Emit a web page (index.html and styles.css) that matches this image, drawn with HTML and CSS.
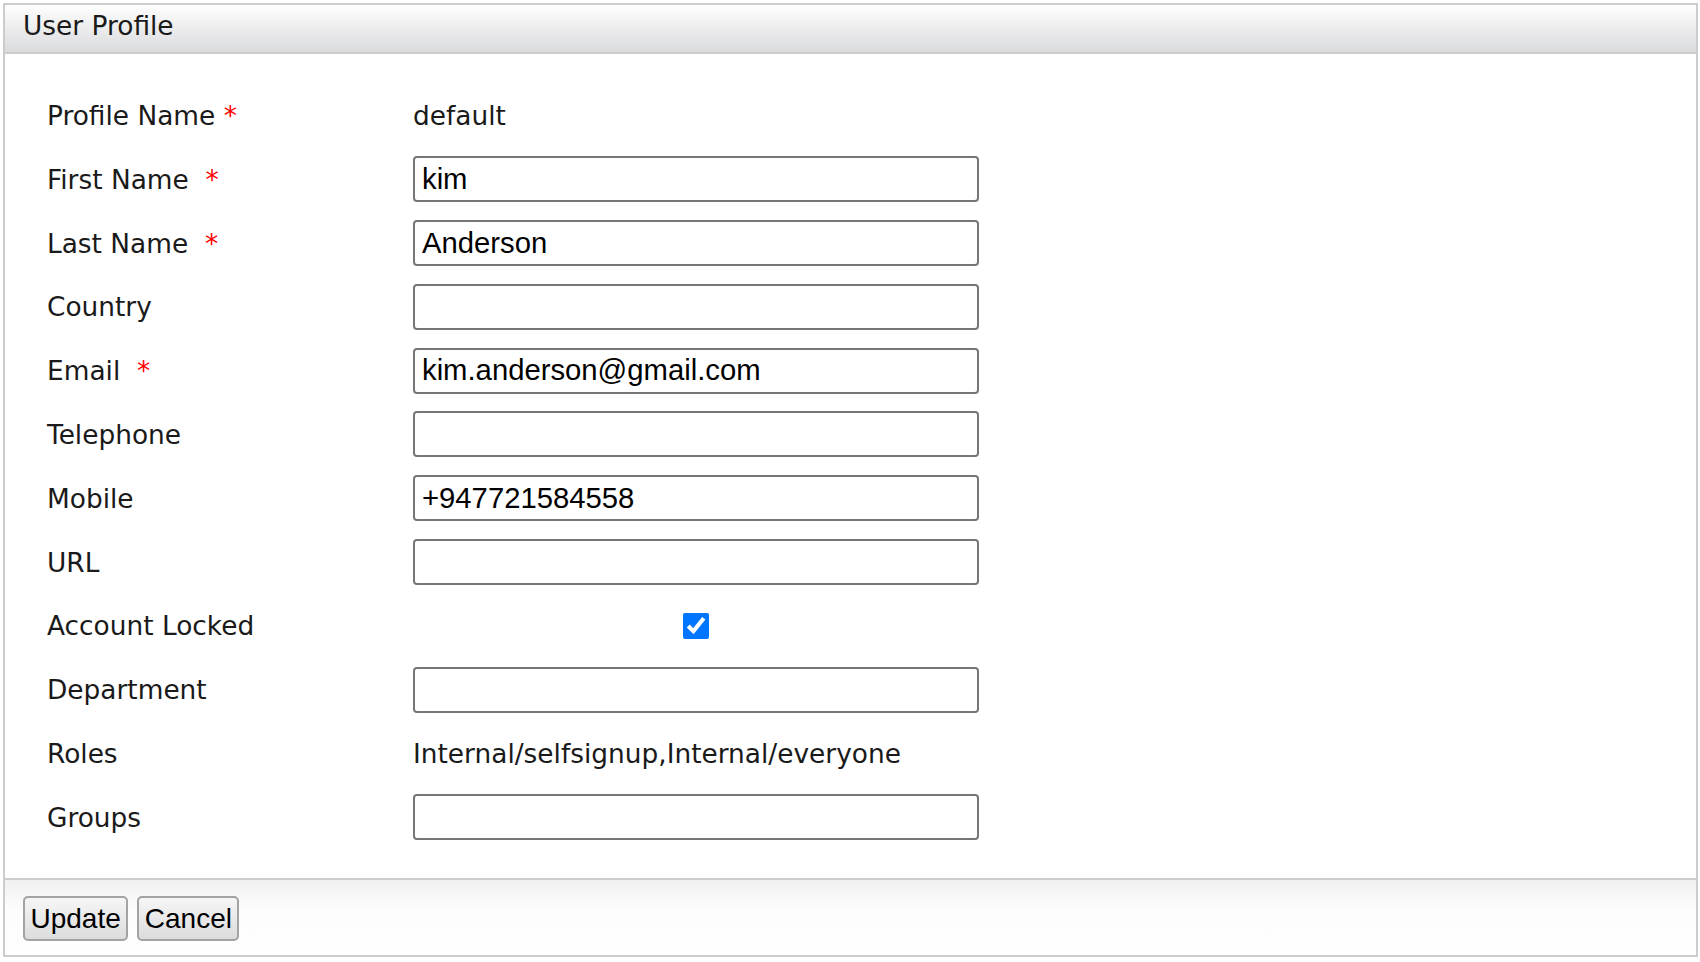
FILE: index.html
```html
<!DOCTYPE html>
<html>
<head>
<meta charset="utf-8">
<title>User Profile</title>
<link rel="stylesheet" href="styles.css">
</head>
<body>
<div class="panel">
  <div class="panel-header">User Profile</div>
  <div class="panel-body">
    <div class="form-grid">
      <div class="label">Profile Name <span class="req">*</span></div>
      <div class="value"><span class="text">default</span></div>

      <div class="label">First Name&nbsp; <span class="req">*</span></div>
      <div class="value"><input class="field" type="text" value="kim"></div>

      <div class="label">Last Name&nbsp; <span class="req">*</span></div>
      <div class="value"><input class="field" type="text" value="Anderson"></div>

      <div class="label">Country</div>
      <div class="value"><input class="field" type="text" value=""></div>

      <div class="label">Email&nbsp; <span class="req">*</span></div>
      <div class="value"><input class="field" type="text" value="kim.anderson@gmail.com"></div>

      <div class="label">Telephone</div>
      <div class="value"><input class="field" type="text" value=""></div>

      <div class="label">Mobile</div>
      <div class="value"><input class="field" type="text" value="+947721584558"></div>

      <div class="label">URL</div>
      <div class="value"><input class="field" type="text" value=""></div>

      <div class="label">Account Locked</div>
      <div class="value value-center"><input class="check" type="checkbox" checked></div>

      <div class="label">Department</div>
      <div class="value"><input class="field" type="text" value=""></div>

      <div class="label">Roles</div>
      <div class="value"><span class="text">Internal/selfsignup,Internal/everyone</span></div>

      <div class="label">Groups</div>
      <div class="value"><input class="field" type="text" value=""></div>
    </div>
  </div>
  <div class="panel-footer">
    <button class="btn" type="button">Update</button>
    <button class="btn" type="button">Cancel</button>
  </div>
</div>
</body>
</html>
```

FILE: styles.css
```css
html, body {
  margin: 0;
  padding: 0;
  background: #ffffff;
}

body {
  padding: 3px 2px 3px 3px;
  font-family: "DejaVu Sans", sans-serif;
  font-size: 26.4px;
  color: #1a1a1a;
}

.panel {
  border: 2px solid #cccccc;
  display: flex;
  flex-direction: column;
}

.panel-header {
  height: 47px;
  line-height: 42px;
  padding-left: 18px;
  background: linear-gradient(#fefefe, #dadbdd);
  border-bottom: 2px solid #cccccc;
  color: #1a1a1a;
}

.panel-body {
  height: 824px;
  box-sizing: border-box;
  padding: 38.5px 0 38px 42px;
}

.form-grid {
  display: grid;
  grid-template-columns: 366px 566px;
  grid-auto-rows: 46px;
  row-gap: 17.8px;
}

.label {
  display: flex;
  align-items: center;
  white-space: pre;
}

.req {
  color: #ff0000;
}

.value {
  display: flex;
  align-items: center;
}

.value-center {
  justify-content: center;
}

.text {
  color: #1a1a1a;
}

.field {
  box-sizing: border-box;
  width: 566px;
  height: 46px;
  margin: 0;
  padding: 0 7px;
  border: 2px solid #767676;
  border-radius: 4px;
  font-family: "Liberation Sans", Arial, sans-serif;
  font-size: 29.25px;
  color: #000000;
  background: #ffffff;
  outline: none;
}

.check {
  width: 26px;
  height: 26px;
  margin: 0;
  accent-color: #0075ff;
}

.panel-footer {
  height: 77px;
  box-sizing: border-box;
  border-top: 2px solid #cccccc;
  background: linear-gradient(#f0f0f0, #fdfdfd 30px, #fefefe);
  display: flex;
  align-items: flex-start;
  gap: 9px;
  padding: 16px 0 0 18px;
}

.btn {
  height: 45px;
  margin: 0;
  padding: 0 5.5px;
  border: 2px solid #a3a3a3;
  border-radius: 5px;
  background: linear-gradient(#f6f6f6, #dcdcdc);
  font-family: "Liberation Sans", Arial, sans-serif;
  font-size: 28px;
  color: #000000;
}
```
